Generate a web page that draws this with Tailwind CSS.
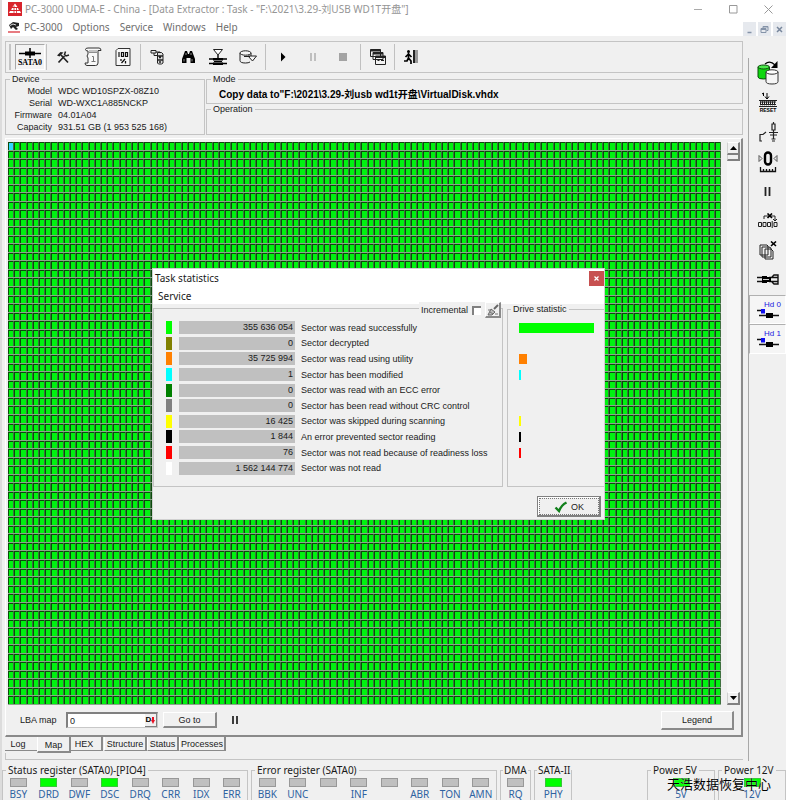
<!DOCTYPE html>
<html lang="en">
<head>
  <meta charset="UTF-8">
  <meta name="viewport" content="width=device-width, initial-scale=1.0">
  <title>PC-3000 UDMA-E</title>
  <script src="https://cdn.jsdelivr.net/npm/@tailwindcss/browser@4"></script>
</head>
<body class="flex min-h-screen flex-col border-l-2 border-[#dcdcdc] bg-[#f0f0f0] font-['Liberation_Sans','Noto_Sans_CJK_SC',sans-serif] text-[9px] leading-[10px] text-[#1a1a1a]">

  <!-- Window title -->
  <header class="flex h-[18px] items-center bg-white pl-1.5 text-[10px] text-[#959595] font-['Noto_Sans','Noto_Sans_CJK_SC',sans-serif]">
    <svg class="mr-[3px] size-[14px]" viewBox="0 0 14 14"><rect width="14" height="14" fill="#d8242c"/><path d="M7 1.5 9.5 5h-5zM4 6h6l.8 2H3.200zM2 9h10l1 2H1z" fill="#fff"/><path d="M6 3.500v8M8.500 5v6M3 12.500h8" stroke="#d8242c" stroke-width=".8"/></svg>
    <h1>PC-3000 UDMA-E - China - [Data Extractor : Task - "F:\2021\3.29-刘USB WD1T开盘"]</h1>
    <div class="ml-auto flex pr-[13px]">
      <button aria-label="Minimize" class="mr-[26px]"><svg class="size-[9px]" viewBox="0 0 9 9"><path d="M0 4.500h8" stroke="#aaa"/></svg></button>
      <button aria-label="Maximize" class="mr-[26px]"><svg class="size-[9px]" viewBox="0 0 9 9"><path d="M.5.5h7.500v7.500H.5z" fill="none" stroke="#999"/></svg></button>
      <button aria-label="Close"><svg class="size-[9px]" viewBox="0 0 9 9"><path d="m.5.5 8 8m0-8-8 8" stroke="#999"/></svg></button>
    </div>
  </header>

  <!-- Menu -->
  <nav class="flex h-[18px] items-center bg-white pl-1.5 text-[10px] text-[#6e6e6e] font-['Noto_Sans',sans-serif]">
    <svg class="mr-1 h-3 w-3" viewBox="0 0 12 12"><path d="M1 4 5 1l6 1v3L8 6l2 2-2 1-3-3-2 2z" fill="#222"/><path d="M2 4.500 5 3l3 1" stroke="#ddd" fill="none"/><path d="M0 11h12" stroke="#d8242c" stroke-width="1.200"/></svg>
    <div class="flex gap-[10px]">
      <button>PC-3000</button>
      <button>Options</button>
      <button>Service</button>
      <button>Windows</button>
      <button>Help</button>
    </div>
    <div class="ml-auto flex h-[14px] gap-[2px] self-end">
      <button aria-label="Minimize task" class="bg-[#e6e9ee] px-[2px]"><svg class="size-[9px]" viewBox="0 0 9 9"><path d="M2.500 7.500h4" stroke="#8493a8" stroke-width="1.500"/></svg></button>
      <button aria-label="Restore task" class="bg-[#e6e9ee] px-[2px]"><svg class="size-[9px]" viewBox="0 0 9 9"><path d="M1 3.500h5v4H1zM3 3V1.500h5v4H6.500M1 4.500h5M3 2h5" fill="none" stroke="#8493a8"/></svg></button>
      <button aria-label="Close task" class="bg-[#e6e9ee] px-[2px]"><svg class="size-[9px]" viewBox="0 0 9 9"><path d="m2 2 5 5m0-5L2 7" stroke="#77869c" stroke-width="1.500"/></svg></button>
    </div>
  </nav>

  <main class="flex grow">
    <div class="min-w-0 flex-1 pl-[3px]">

      <!-- Toolbar -->
      <div class="mt-[5px] flex h-[32px] items-stretch border border-[#c4c4c4] py-[2px] pl-[3px] text-black">
        <span class="mr-[4px] w-[2px] border-x border-x-[#c4c4c4]"></span>
        <button class="flex w-[30px] flex-col items-center justify-center border border-t-[#a8a8a8] border-r-white border-b-white border-l-[#a8a8a8] bg-[#f3f3f3]">
          <svg class="h-[11px] w-[22px]" viewBox="0 0 22 11"><path d="M0 5.500h22" stroke="#000" stroke-width="1.500"/><path d="M6 5.500h10" stroke="#000" stroke-width="4"/><path d="M11 0v10" stroke="#000" stroke-width="1.500"/></svg>
          <b class="text-[8px] leading-[8px] font-['Liberation_Serif',serif]">SATA0</b>
        </button>
        <span class="mx-px w-px bg-[#c0c0c0]"></span>
        <button aria-label="Utility settings" class="grid w-[30px] place-items-center"><svg class="size-[14px]" viewBox="0 0 14 14"><path d="M2.500 12.500 8.500 6M12 12.500 5 5" stroke="#222" stroke-width="1.700"/><path d="M1 5.500 4.500 2l3 .500L3.500 6.500z" fill="#222"/><path d="M9.500 1.500 8.500 4.500l1.500 1.500 3-1" fill="none" stroke="#222" stroke-width="1.500"/></svg></button>
        <button aria-label="Script" class="grid w-[30px] place-items-center"><svg class="h-[20px] w-[18px]" viewBox="0 0 18 20"><path d="M4 1h11q2 0 2 2.500H14V16q0 2.500-2.500 2.500H3Q1 18.500 1 16h3V11L3 9l1-2V4Q1.500 4 1.500 2.500T4 1z" fill="#f8f8f8" stroke="#333"/><path d="M5.500 4h7M5.500 5.500h7" stroke="#222" stroke-dasharray="1 1"/><path d="M8 9.500h1.500v5M7.500 14.500h4" fill="none" stroke="#777"/></svg></button>
        <button aria-label="Drive resources" class="grid w-[30px] place-items-center"><svg class="h-[20px] w-[16px]" viewBox="0 0 16 20"><path d="M3 1.500h12v17H1v-15z" fill="#f8f8f8" stroke="#333"/><path d="M4 5v5M6.500 5.500h2v4h-2zM10.500 5.500h2v4h-2z" fill="none" stroke="#111" stroke-width="1.200"/><path d="M6 12v2M6.500 16 10 12M10.500 14v2.500" stroke="#111" stroke-width="1.300"/></svg></button>
        <span class="mx-[2px] w-px bg-[#c0c0c0]"></span>
        <button aria-label="Object tree" class="grid w-[30px] place-items-center"><svg class="size-[16px]" viewBox="0 0 16 16"><path d="M1 1.500h5v2.500H1z" fill="#eee" stroke="#222"/><path d="M4 4v2.500h4M6 3h4" fill="none" stroke="#222"/><path d="M7.500 3.500h4l1.500 1.500v9l-1.500 1h-3L7.500 14z" fill="#ddd" stroke="#222"/><path d="M7.500 7h5.500M7.500 11h5.500M9 8.500h2M9 13h2" stroke="#222" stroke-width="1.300"/></svg></button>
        <button aria-label="Search" class="grid w-[30px] place-items-center"><svg class="h-[12px] w-[13px]" viewBox="0 0 13 12"><path d="M3 0h2l1 3h1l1-3h2l3 8v4H8.500V7h-4v5H0V8z" fill="#000"/><path d="M2 8v2.500M10 8v2.500M4 2v2M9 2v2" stroke="#aaa" stroke-width=".8"/></svg></button>
        <button aria-label="Filter sectors" class="grid w-[30px] place-items-center"><svg class="h-[16px] w-[18px]" viewBox="0 0 18 16"><path d="M4.500.500h9L9 6z" fill="#fff" stroke="#222"/><path d="M9 6v3M0 10h18M0 14.500h18" stroke="#000" stroke-width="1.400"/><path d="M4 9h10v2.500H4zM5 12h8v1H5zM4 13.500h10V16H4z" fill="#000"/></svg></button>
        <button aria-label="Drive image" class="grid w-[30px] place-items-center"><svg class="h-[14px] w-[18px]" viewBox="0 0 18 14"><path d="M1 3v7.500q0 2.500 5.500 2.500 3 0 4.500-1M12 6V3" fill="none" stroke="#222"/><ellipse cx="6.500" cy="3" rx="5.500" ry="2.200" fill="#f6f6f6" stroke="#222"/><path d="M5 6.500h6M9 6h8.500l-4 5z" fill="#f6f6f6" stroke="#222"/></svg></button>
        <span class="mx-[2px] w-px bg-[#c0c0c0]"></span>
        <button aria-label="Start" class="grid w-[30px] place-items-center"><svg class="size-[10px]" viewBox="0 0 10 10"><path d="m3 .500 4.500 4.500L3 9.500z" fill="#000"/></svg></button>
        <button aria-label="Pause" class="grid w-[30px] place-items-center"><svg class="size-[8px]" viewBox="0 0 8 8"><path d="M2 0v8M6 0v8" stroke="#aaa" stroke-width="1.400"/></svg></button>
        <button aria-label="Stop" class="grid w-[30px] place-items-center"><span class="size-[8px] bg-[#a3a3a3]"></span></button>
        <span class="mx-[2px] w-px bg-[#c0c0c0]"></span>
        <button aria-label="Windows" class="grid w-[30px] place-items-center"><svg class="size-[16px]" viewBox="0 0 16 16"><g fill="#f2f2f2" stroke="#222"><path d="M.5.500h10v7H.5zM3 3.500h10v7H3zM5.500 7h10v8.500h-10z"/></g><path d="M.5 1.500h10M3 4.500h10M5.500 8h10" stroke="#222" stroke-width="1.800"/><path d="M7.500 11.500h2M11 11.500h3" stroke="#222"/></svg></button>
        <span class="mx-px w-px bg-[#c0c0c0]"></span>
        <button aria-label="Exit" class="grid w-[30px] place-items-center"><svg class="size-[14px]" viewBox="0 0 14 14"><circle cx="4.500" cy="1.500" r="1.500"/><path d="M4.500 3v5l2.500 3v3M4.500 8 3 11H0M4.500 4 1.500 7M4.500 4l3 3" fill="none" stroke="#000" stroke-width="1.700"/><path d="M9 0h2v13H9z" fill="#222"/><path d="M11 0h3v13h-3z" fill="#999"/></svg></button>
      </div>

      <!-- Drive details -->
      <div class="mt-px flex gap-px">
        <fieldset class="w-[200px] border border-[#c4c4c4] pb-[2px]">
          <legend class="ml-[4px] px-[2px]">Device</legend>
          <dl class="mt-[2px] grid grid-cols-[46px_1fr] gap-x-[6px] gap-y-[2px] [&>dt]:text-right">
            <dt>Model</dt><dd>WDC WD10SPZX-08Z10</dd>
            <dt>Serial</dt><dd>WD-WXC1A885NCKP</dd>
            <dt>Firmware</dt><dd>04.01A04</dd>
            <dt>Capacity</dt><dd>931.51 GB (1 953 525 168)</dd>
          </dl>
        </fieldset>
        <div class="flex min-w-0 flex-1 flex-col">
          <fieldset class="h-[30px] border border-[#c4c4c4]">
            <legend class="ml-[4px] px-[2px]">Mode</legend>
            <p class="mt-[6px] pl-[12px] text-[10px] font-bold text-black">Copy data to"F:\2021\3.29-刘usb wd1t开盘\VirtualDisk.vhdx</p>
          </fieldset>
          <fieldset class="flex-1 border border-[#c4c4c4]">
            <legend class="ml-[4px] px-[2px]">Operation</legend>
          </fieldset>
        </div>
      </div>

      <!-- Map page -->
      <section class="relative mt-[3px] border-t border-r-2 border-b-2 border-l border-t-white border-r-[#8a8a8a] border-b-[#8a8a8a] border-l-white pt-[3px]">
        <div class="flex gap-[6px] pr-px pl-[2px]">
          <div class="aspect-[714/564] min-w-0 flex-1">
            <canvas id="sectorMap" class="block size-full"></canvas>
          </div>
          <div class="flex w-[13px] flex-col bg-[#f6f6f6]">
            <button aria-label="Scroll up" class="grid h-[13px] place-items-center border-t border-r-2 border-b-2 border-l border-t-white border-r-[#808080] border-b-[#808080] border-l-[#d0d0d0] bg-[#f0f0f0]"><svg class="h-[4px] w-[7px]" viewBox="0 0 7 4"><path d="M0 4h7L3.500 0z"/></svg></button>
            <span class="h-[6px] border-r-2 border-b-2 border-l border-r-[#808080] border-b-[#808080] border-l-[#d0d0d0] bg-[#f0f0f0]"></span>
            <button aria-label="Scroll down" class="mt-auto grid h-[13px] place-items-center border-t border-r-2 border-b-2 border-l border-t-white border-r-[#808080] border-b-[#808080] border-l-[#d0d0d0] bg-[#f0f0f0]"><svg class="h-[4px] w-[7px]" viewBox="0 0 7 4"><path d="M0 0h7L3.500 4z"/></svg></button>
          </div>
        </div>
        <div class="flex h-[30px] items-center pr-[7px] pl-[14px]">
          <label for="lba" class="w-[46px]">LBA map</label>
          <div class="flex h-[16px] w-[92px] border-t-2 border-r border-b border-l-2 border-t-[#808080] border-r-[#c8c8c8] border-b-[#c8c8c8] border-l-[#808080] bg-white">
            <input id="lba" type="text" value="0" class="w-0 min-w-0 flex-1 pl-[2px]">
            <button class="flex w-[12px] items-center justify-center border-r border-b border-[#808080] bg-[#f0f0f0] text-[8px] font-bold text-black">D<svg class="h-[7px] w-[4px]" viewBox="0 0 4 7"><path d="M1 0h2v3h1L2 7 0 3h1z" fill="#e81123"/></svg></button>
          </div>
          <button class="ml-[5px] h-[16px] w-[54px] border-t border-r-2 border-b-2 border-l border-t-white border-r-[#8a8a8a] border-b-[#8a8a8a] border-l-white">Go to</button>
          <button aria-label="Pause map" class="ml-[14px]"><svg class="size-[8px]" viewBox="0 0 8 8"><path d="M2 0v8M6 0v8" stroke="#111" stroke-width="1.600"/></svg></button>
          <button class="ml-auto h-[19px] w-[73px] border-t border-r-2 border-b-2 border-l border-t-white border-r-[#8a8a8a] border-b-[#8a8a8a] border-l-white">Legend</button>
        </div>

        <!-- Task statistics window -->
        <div role="dialog" aria-labelledby="dialogTitle" class="absolute top-[129px] left-[146px] w-[453px] border border-[#d0d0d0] bg-[#f0f0f0]">
          <div class="flex h-[18px] items-center bg-white pl-[2px] font-['Noto_Sans',sans-serif] text-[10px]">
            <h2 id="dialogTitle">Task statistics</h2>
            <button aria-label="Close" class="ml-auto grid h-[15px] w-[15px] place-items-center bg-[#c75050] text-white"><svg class="size-[5px]" viewBox="0 0 5 5"><path d="m.5.500 4 4m0-4-4 4" stroke="#fff" stroke-width="1.200"/></svg></button>
          </div>
          <div class="flex h-[17px] items-center bg-white pl-[5px] font-['Noto_Sans',sans-serif] text-[10px]"><button>Service</button></div>
          <div class="flex gap-[4px]">
            <div class="relative w-[350px]">
              <fieldset class="mt-[4px] h-[179px] border border-[#c4c4c4] pl-[12px]">
                <table class="mt-[11px] h-[156px]">
                  <caption class="sr-only">Sector counters</caption>
                  <tbody id="stats"></tbody>
                </table>
              </fieldset>
              <div class="absolute -top-[2px] right-[2px] flex items-center gap-[4px] bg-[#f0f0f0] pl-[2px]">
                <label for="incremental">Incremental</label>
                <input id="incremental" type="checkbox" class="size-[9px] appearance-none border-t-2 border-l-2 border-[#808080] bg-white">
                <button aria-label="Clear statistics" class="grid h-[16px] w-[16px] place-items-center border-t border-r-2 border-b-2 border-l border-t-white border-r-[#8a8a8a] border-b-[#8a8a8a] border-l-white"><svg class="size-[12px]" viewBox="0 0 12 12"><path d="m11 1-4 4" stroke="#666" stroke-width="2"/><path d="m4 5 4 3-3 3H1z" fill="#bbb" stroke="#666"/><path d="M3 8l3 2M8 10h3M1 6h2" fill="none" stroke="#777"/></svg></button>
              </div>
            </div>
            <fieldset class="h-[183px] flex-1 border border-r-0 border-[#c4c4c4] pl-[11px]">
              <legend class="-ml-[8px] px-[2px]">Drive statistic</legend>
              <div id="bars" class="mt-[6px] grid h-[156px] auto-rows-fr items-center"></div>
            </fieldset>
          </div>
          <div class="flex justify-end px-[3px] pt-[9px] pb-[2px]">
            <button class="h-[21px] w-[64px] border border-[#808080] p-px shadow-[inset_-1px_-1px_#808080,inset_1px_1px_#fff]">
              <span class="flex h-full items-center justify-center gap-[3px] border border-dotted border-[#777]">
                <svg class="h-[12px] w-[14px]" viewBox="0 0 14 12"><path d="M1.500 6.500 5 10Q7.500 4 12.500 1.500" fill="none" stroke="#12801c" stroke-width="2.400"/></svg>OK
              </span>
            </button>
          </div>
        </div>
      </section>

      <!-- Page tabs -->
      <div role="tablist" class="flex items-start">
        <button role="tab" class="h-[14px] w-[32px] border-b border-[#8a8a8a] pr-[6px]">Log</button>
        <button role="tab" aria-selected="true" class="h-[16px] w-[34px] border-r-2 border-b-2 border-l border-r-[#8a8a8a] border-b-[#8a8a8a] border-l-white pt-[2px]">Map</button>
        <button role="tab" class="h-[14px] w-[32px] border-r-2 border-b border-[#8a8a8a] pr-[4px]">HEX</button>
        <button role="tab" class="ml-px h-[14px] w-[43px] border-r-2 border-b border-l border-[#8a8a8a] border-l-white">Structure</button>
        <button role="tab" class="h-[14px] w-[32px] border-r-2 border-b border-l border-[#8a8a8a] border-l-white">Status</button>
        <button role="tab" class="h-[14px] w-[47px] border-r-2 border-b border-l border-[#8a8a8a] border-l-white">Processes</button>
      </div>
      <div class="h-[7px] border-b border-l border-[#c4c4c4]"></div>
    </div>

    <!-- Drive tools -->
    <aside class="ml-[5px] flex w-[38px] flex-col pt-[22px]">
      <div class="flex grow flex-col border-l border-[#a8a8a8]">
        <div class="grid h-[296px] auto-rows-fr">
          <button aria-label="Power" class="grid place-items-center"><svg class="h-[24px] w-[22px]" viewBox="0 0 22 24"><path d="M8 3q5-4 10 1" fill="none" stroke="#000" stroke-width="1.200"/><path d="M20.500 0v7H14z"/><path d="M1 6v10q0 2 5.500 2t6-2V6z" fill="#0fd80f" stroke="#0a4a0a"/><ellipse cx="6.700" cy="6" rx="5.700" ry="2" fill="#4be84b" stroke="#0a4a0a"/><path d="M9 11v9.500q0 2.500 6 2.500t6-2.500V11z" fill="#f6f6f6" stroke="#333"/><ellipse cx="15" cy="11" rx="6" ry="2.200" fill="#fff" stroke="#333"/></svg></button>
          <button aria-label="Reset" class="grid place-items-center"><svg class="h-[21px] w-[18px]" viewBox="0 0 18 21"><path d="M3 2l1.500-1V4M8 1v6M6 4.500 8 7l2-2.500" fill="none" stroke="#000"/><path d="M0 8.500h18M0 14.500h18M1 10h16M1 12.500h16" stroke="#222"/><path d="M1 11.300h16" stroke="#222" stroke-width="4" stroke-dasharray="1 1"/><text x="9" y="20" text-anchor="middle" font-size="5" font-weight="bold">RESET</text></svg></button>
          <button aria-label="Relay" class="grid place-items-center"><svg class="h-[20px] w-[20px]" viewBox="0 0 20 20"><path d="M4 19H2v-6.500h3L8 10M15.500 0v2M14 2h3v6h-3zM15.500 8v9M11 10.500h9M12 13h7M13.500 17h4M14 19h3" fill="none" stroke="#222" stroke-width="1.200"/></svg></button>
          <button aria-label="Recalibration" class="grid place-items-center"><svg class="h-[22px] w-[20px]" viewBox="0 0 20 22"><path d="M1 4.500v6l3-3zM19 4.500v6l-3-3z" fill="none" stroke="#555"/><rect x="7" y="1.500" width="6" height="12" rx="3" fill="none" stroke="#000" stroke-width="2.400"/><path d="M2.500 16v4.500h15V16M5.500 18v2.500M8.500 18v2.500M11.500 18v2.500M14.500 18v2.500" fill="none" stroke="#111" stroke-width="1.300"/></svg></button>
          <button aria-label="Sleep" class="grid place-items-center"><svg class="size-[9px]" viewBox="0 0 9 9"><path d="M2.500 0v9M6.500 0v9" stroke="#222" stroke-width="1.800"/></svg></button>
          <button aria-label="Skip sectors" class="grid place-items-center"><svg class="h-[15px] w-[20px]" viewBox="0 0 20 15"><path d="M6 6V3h11v5M15 6l2 2 2-2" fill="none" stroke="#222"/><path d="m9.500.500 4.500 4.500m0-4.500L9.500 5" stroke="#000" stroke-width="1.600"/><path d="M.5 9.500h3v4h-3zM5 9.500h3v4H5zM9.500 9.500h3v4h-3zM16 9.500h3v4h-3zM14.200 8v7" fill="none" stroke="#222"/></svg></button>
          <button aria-label="Copy map" class="grid place-items-center"><svg class="h-[19px] w-[19px]" viewBox="0 0 19 19"><g fill="#f0f0f0" stroke="#222"><path d="M2 4h7l1 1v9H2zM4 6h7l2 1v9H4zM7 8h6l2 2v8H7z"/></g><path d="m13 .500 5 4.500m0-4.500L13 5" stroke="#000" stroke-width="1.600"/></svg></button>
          <button aria-label="Connector" class="grid place-items-center"><svg class="h-[11px] w-[22px]" viewBox="0 0 22 11"><path d="M0 3.500h8M0 7.500h8M12 3.500h9M12 7.500h9M15 3l2-2h4v9h-4l-2-2" fill="none" stroke="#111" stroke-width="1.400"/><path d="M5 2h5v7H5zM10 3h4v5h-4z" fill="#000"/><path d="M6 5.500h6" stroke="#ccc"/></svg></button>
          <button class="flex flex-col items-center justify-center border border-t-[#b0b0b0] border-l-[#b0b0b0] border-r-white border-b-white bg-[#f5f5f5] text-[8px] leading-[8px] text-[#2020e0]"><span class="pl-[10px]">Hd 0</span><svg class="h-[10px] w-[22px]" viewBox="0 0 22 10"><path d="M0 1.500h5M2 6.500h20" stroke="#111" stroke-width="1.400"/><path d="M9 4h7v5H9z"/><path d="M4 0h4v4.500H4z" fill="#1010f0"/></svg></button>
          <button class="flex flex-col items-center justify-center border border-t-[#b0b0b0] border-l-[#b0b0b0] border-r-white border-b-white bg-[#f5f5f5] text-[8px] leading-[8px] text-[#2020e0]"><span class="pl-[10px]">Hd 1</span><svg class="h-[10px] w-[22px]" viewBox="0 0 22 10"><path d="M0 1.500h5M2 6.500h20" stroke="#111" stroke-width="1.400"/><path d="M9 4h7v5H9z"/><path d="M4 0h4v4.500H4z" fill="#1010f0"/></svg></button>
        </div>
      </div>
    </aside>
  </main>

  <!-- Registers -->
  <footer class="relative flex gap-[3px] pt-[4px] text-[10px] whitespace-nowrap font-['Noto_Sans',sans-serif]">
    <fieldset class="w-[246px] border border-b-0 border-[#c4c4c4]">
      <legend class="ml-[3px] px-[2px]">Status register (SATA0)-[PIO4]</legend>
      <div id="statusRegister" class="grid grid-cols-8 pt-[3px]"></div>
    </fieldset>
    <fieldset class="w-[246px] border border-b-0 border-[#c4c4c4]">
      <legend class="ml-[3px] px-[2px]">Error register (SATA0)</legend>
      <div id="errorRegister" class="grid grid-cols-8 pt-[3px]"></div>
    </fieldset>
    <fieldset class="w-[31px] border border-b-0 border-[#c4c4c4]">
      <legend class="ml-[2px] px-px">DMA</legend>
      <div id="dmaRegister" class="grid pt-[3px]"></div>
    </fieldset>
    <fieldset class="w-[38px] border border-b-0 border-[#c4c4c4]">
      <legend class="ml-[2px] px-px">SATA-II</legend>
      <div id="sataRegister" class="grid pt-[3px]"></div>
    </fieldset>
    <fieldset class="ml-auto w-[68px] border border-b-0 border-[#c4c4c4]">
      <legend class="ml-[3px] px-[2px]">Power 5V</legend>
      <div id="power5" class="grid pt-[3px]"></div>
    </fieldset>
    <fieldset class="w-[68px] border border-b-0 border-[#c4c4c4]">
      <legend class="ml-[3px] px-[2px]">Power 12V</legend>
      <div id="power12" class="grid pt-[3px]"></div>
    </fieldset>
    <p class="absolute right-[15px] bottom-[8px] font-['Noto_Sans_CJK_SC',sans-serif] text-[13px] leading-[16px] text-black text-shadow-[0_0_1px_#fff]">天浩数据恢复中心</p>
  </footer>

  <script>
    const stats = [
      { color: "#00ff00", count: "355 636 054", text: "Sector was read successfully", bar: 75 },
      { color: "#808000", count: "0", text: "Sector decrypted", bar: 0 },
      { color: "#ff8000", count: "35 725 994", text: "Sector was read using utility", bar: 8 },
      { color: "#00ffff", count: "1", text: "Sector has been modified", bar: 2 },
      { color: "#008000", count: "0", text: "Sector was read with an ECC error", bar: 0 },
      { color: "#808080", count: "0", text: "Sector has been read without CRC control", bar: 0 },
      { color: "#ffff00", count: "16 425", text: "Sector was skipped during scanning", bar: 2 },
      { color: "#000000", count: "1 844", text: "An error prevented sector reading", bar: 2 },
      { color: "#ff0000", count: "76", text: "Sector was not read because of readiness loss", bar: 2 },
      { color: "#ffffff", count: "1 562 144 774", text: "Sector was not read", bar: 0 }
    ];

    document.getElementById("stats").innerHTML = stats.map(s => `
      <tr>
        <td class="p-0"><div class="h-[13px] w-[6px]" style="background:${s.color}"></div></td>
        <td class="py-0 pr-0 pl-[7px]"><div class="h-[13px] w-[116px] bg-[#c0c0c0] pr-[2px] text-right leading-[13px]">${s.count}</div></td>
        <td class="py-0 pr-0 pl-[6px] whitespace-nowrap">${s.text}</td>
      </tr>`).join("");

    document.getElementById("bars").innerHTML = stats.map(s =>
      `<div class="h-[10px]" style="width:${s.bar}px;background:${s.color}"></div>`).join("");

    const registers = {
      statusRegister: ["BSY", "DRD*", "DWF", "DSC*", "DRQ", "CRR", "IDX", "ERR"],
      errorRegister: ["BBK", "UNC", "", "INF", "", "ABR", "TON", "AMN"],
      dmaRegister: ["RQ"],
      sataRegister: ["PHY*"],
      power5: ["5V*"],
      power12: ["12V*"]
    };

    // a trailing * means the lamp is lit
    for (const id in registers) {
      document.getElementById(id).innerHTML = registers[id].map(name => `
        <div class="flex h-[22px] flex-col items-center gap-[2px] text-[#2f62a0]">
          <span class="h-[9px] w-[17px] border ${name.endsWith("*") ? "border-[#3cc43c] bg-[#00ff00]" : "border-[#989898] bg-[#c0c0c0]"}"></span>
          <span>${name.replace("*", "")}</span>
        </div>`).join("");
    }

    const sectorMap = document.getElementById("sectorMap");

    function drawMap() {
      const cols = 115, rows = 66;
      const box = sectorMap.parentElement;
      sectorMap.width = box.clientWidth;
      sectorMap.height = box.clientHeight;
      const ctx = sectorMap.getContext("2d");
      const stepX = sectorMap.width / cols;
      const stepY = sectorMap.height / rows;
      for (let row = 0; row < rows; row++) {
        const y = Math.round(row * stepY);
        const h = Math.round((row + 1) * stepY) - y;
        for (let col = 0; col < cols; col++) {
          const x = Math.round(col * stepX);
          const w = Math.round((col + 1) * stepX) - x;
          // light gap, dark frame, lit cell
          ctx.fillStyle = "#8aa88a";
          ctx.fillRect(x, y, w, h);
          ctx.fillStyle = "#0c4a0c";
          ctx.fillRect(x, y, w, h - 1);
          ctx.fillStyle = "#3f703f";
          ctx.fillRect(x + w - 1, y, 1, h - 1);
          ctx.fillStyle = row + col === 0 ? "#30d8ff" : "#00f210";
          ctx.fillRect(x + 1, y + 1, w - 2, h - 2);
        }
      }
    }

    new ResizeObserver(drawMap).observe(sectorMap.parentElement);
  </script>
</body>
</html>
